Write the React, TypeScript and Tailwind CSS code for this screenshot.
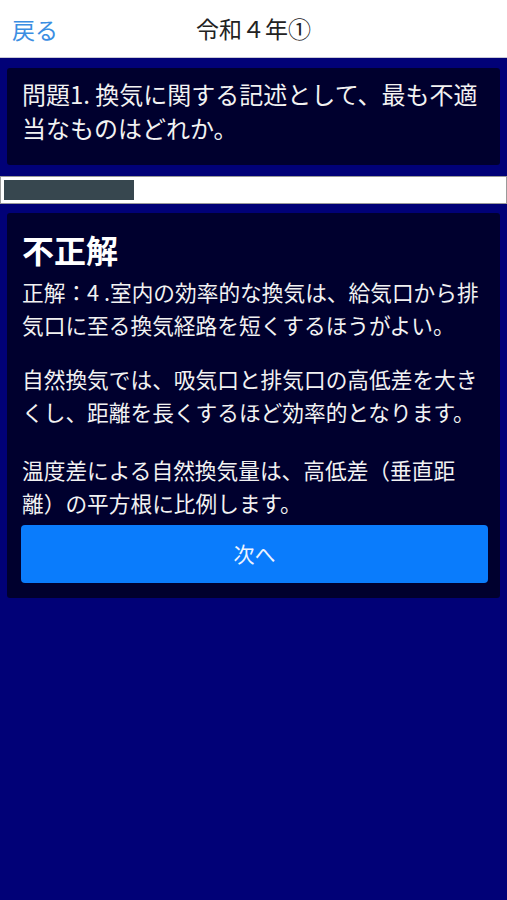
import React from 'react';

const FONT = '"Noto Sans CJK JP", "Noto Sans", sans-serif';

const EXPLANATION: string[] = [
  '正解：4 .室内の効率的な換気は、給気口から排気口に至る換気経路を短くするほうがよい。',
  '自然換気では、吸気口と排気口の高低差を大きくし、距離を長くするほど効率的となります。',
  '温度差による自然換気量は、高低差（垂直距離）の平方根に比例します。',
];

export default function App() {
  const progress = 26;

  return (
    <div
      className="min-h-[900px] w-full bg-[#010177] flex flex-col [text-spacing-trim:space-all]"
      style={{ fontFamily: FONT }}
    >
      {/* Header */}
      <header className="relative h-[58px] bg-white border-b border-[#c9c9d6] flex items-center justify-center">
        <button className="absolute left-3 top-1/2 -translate-y-1/2 text-[23px] text-[#3b8ee2]">戻る</button>
        <h1 className="text-[23px] text-[#222]">令和４年①</h1>
      </header>

      {/* Question */}
      <section className="mt-[10px] mx-[7px] bg-[#00002e] rounded-[3px] pl-[15px] pr-[12px] pt-[9px] pb-[20px]">
        <p className="text-[24px] leading-[34px] text-[#f2f2f2]">問題1. 換気に関する記述として、最も不適当なものはどれか。</p>
      </section>

      {/* Progress */}
      <div className="mt-[11px] h-[28px] bg-white border border-[#9a9a9a] p-[3px]">
        <div className="h-full bg-[#37474f]" style={{ width: `${progress}%` }} />
      </div>

      {/* Answer */}
      <section className="mt-[9px] mx-[7px] bg-[#00002e] rounded-[3px] pl-[15px] pr-[12px] pt-[13px] pb-[15px]">
        <h2 className="text-[32px] leading-[46px] font-bold text-white">不正解</h2>
        <div className="mt-[3px] text-[21.7px] leading-[33px] text-[#f2f2f2]">
          <p>{EXPLANATION[0]}</p>
          <p className="mt-[21px]">{EXPLANATION[1]}</p>
          <p className="mt-[25px]">{EXPLANATION[2]}</p>
        </div>
        <button className="mt-[6px] w-[467px] h-[58px] bg-[#0a7cfc] rounded-[4px] text-[21px] text-[#eef4ff] flex items-center justify-center -ml-px">
          次へ
        </button>
      </section>
    </div>
  );
}
